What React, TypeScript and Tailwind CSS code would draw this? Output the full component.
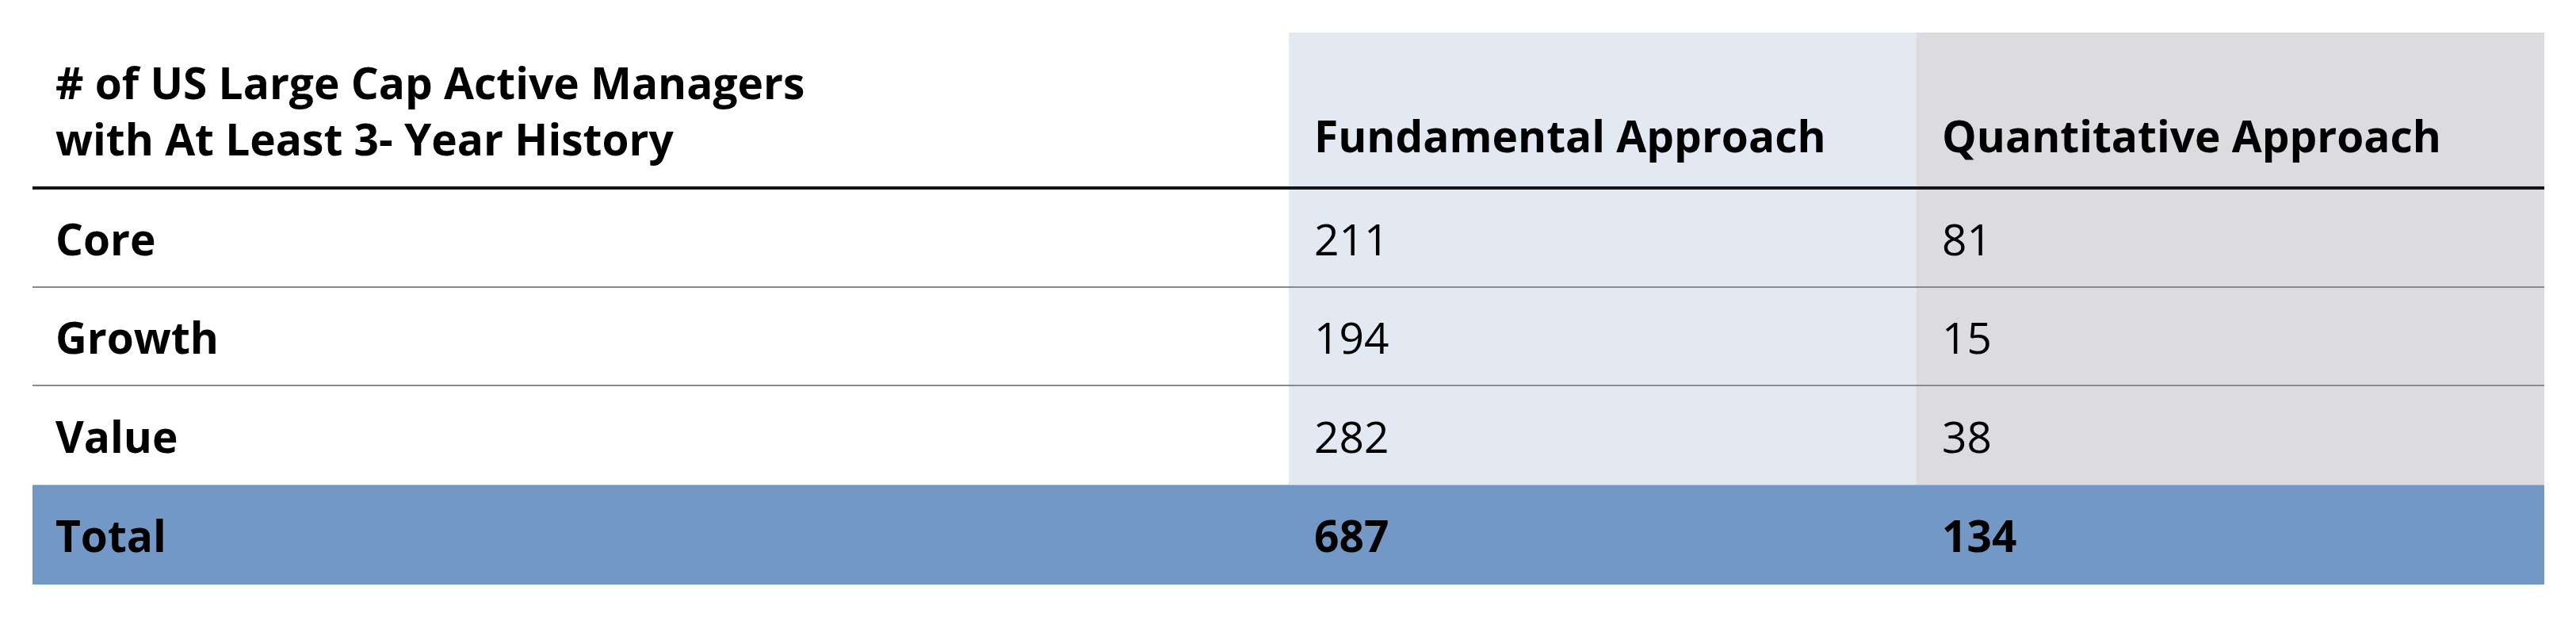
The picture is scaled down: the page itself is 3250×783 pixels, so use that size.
const rows = [
  { label: "Core", fundamental: "211", quantitative: "81" },
  { label: "Growth", fundamental: "194", quantitative: "15" },
  { label: "Value", fundamental: "282", quantitative: "38" },
]

export default function App() {
  return (
    <div className="min-h-[783px] bg-white pl-[41px] pt-[41px] font-['Open_Sans',sans-serif] text-[55px] leading-[71px] text-black">
      <div className="w-[3169px]">
        {/* header */}
        <div className="grid h-[198px] grid-cols-[1585px_792px_792px] border-b-4 border-[#151515]">
          <div className="flex items-end pb-[25px] pl-[29px] font-bold">
            <div>
              # of US Large Cap Active Managers
              <br />
              with At Least 3- Year History
            </div>
          </div>
          <div className="flex items-end bg-[#e3e9f3] pb-[29px] pl-[32px] font-bold">
            Fundamental Approach
          </div>
          <div className="flex items-end bg-[#dcdbe0] pb-[29px] pl-[32px] font-bold">
            Quantitative Approach
          </div>
        </div>

        {rows.map((row, i) => (
          <div
            key={row.label}
            className={
              i < rows.length - 1
                ? "grid h-[124px] grid-cols-[1585px_792px_792px] border-b-2 border-[#8a8a8a]"
                : "grid h-[124px] grid-cols-[1585px_792px_792px]"
            }
          >
            <div className="flex items-center pl-[29px] font-bold">{row.label}</div>
            <div className="flex items-center bg-[#e3e9f3] pl-[32px]">{row.fundamental}</div>
            <div className="flex items-center bg-[#dcdbe0] pl-[32px]">{row.quantitative}</div>
          </div>
        ))}

        {/* total */}
        <div className="grid h-[126px] grid-cols-[1585px_792px_792px] border-t border-[#a9bdd6] bg-[#7398c5] font-bold">
          <div className="flex items-center pl-[29px]">Total</div>
          <div className="flex items-center pl-[32px]">687</div>
          <div className="flex items-center pl-[32px]">134</div>
        </div>
      </div>
    </div>
  )
}
